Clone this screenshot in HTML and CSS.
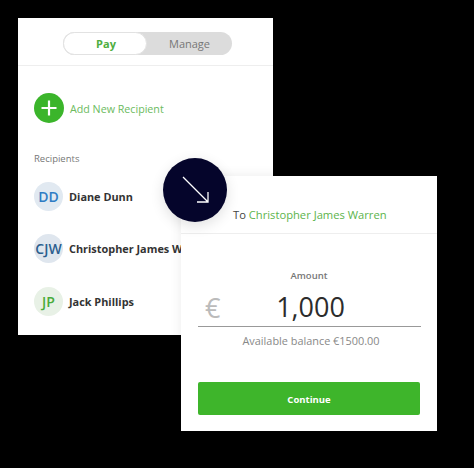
FILE: index.html
```html
<!DOCTYPE html>
<html lang="en">
<head>
    <meta charset="UTF-8">
    <title>Pay</title>
    <link rel="stylesheet" href="styles.css">
</head>
<body>

<div class="stage">
    <!-- Recipients card -->
    <div class="card-left">
        <div class="tabs-bar">
            <div class="tabs">
                <span class="tab tab-active">Pay</span>
                <span class="tab">Manage</span>
            </div>
        </div>
        <div class="left-body">
            <div class="add-row">
                <svg class="add-icon" width="30" height="30" viewBox="0 0 30 30">
                    <circle cx="15" cy="15" r="15" fill="#3bb52b"/>
                    <path d="M15 7.5V22.5M7.5 15H22.5" stroke="#fff" stroke-width="2.2" fill="none"/>
                </svg>
                <span class="add-label">Add New Recipient</span>
            </div>
            <p class="section-label">Recipients</p>
            <div class="recipient">
                <span class="avatar avatar-blue">DD</span>
                <span class="name">Diane Dunn</span>
            </div>
            <div class="recipient">
                <span class="avatar avatar-navy">CJW</span>
                <span class="name">Christopher James Warren</span>
            </div>
            <div class="recipient">
                <span class="avatar avatar-green">JP</span>
                <span class="name">Jack Phillips</span>
            </div>
        </div>
    </div>

    <!-- Amount card -->
    <div class="card-right">
        <div class="to-row">To <span class="to-name">Christopher James Warren</span></div>
        <div class="right-body">
            <p class="amount-label">Amount</p>
            <div class="amount-row">
                <span class="currency">€</span>
                <span class="amount">1,000</span>
            </div>
            <p class="balance">Available balance €1500.00</p>
            <button class="btn">Continue</button>
        </div>
    </div>

    <!-- Arrow badge -->
    <div class="arrow-badge">
        <svg width="64" height="64" viewBox="0 0 64 64">
            <path d="M20 19L45 44M34 44H45V34" stroke="#fff" stroke-width="1.3" fill="none"/>
        </svg>
    </div>
</div>

</body>
</html>
```

FILE: styles.css
```css
/* General Page Styling */
html, body {
    margin: 0;
    height: 100%;
    background: #000;
}

body {
    font-family: "Open Sans", Arial, sans-serif;
    overflow: hidden;
}

p {
    margin: 0;
}

.stage {
    position: relative;
    width: 474px;
    height: 468px;
    padding: 18px 0 0 18px;
    box-sizing: border-box;
}

/* Recipients Card */
.card-left {
    width: 255px;
    height: 317px;
    background: #fff;
    overflow: hidden;
}

.tabs-bar {
    height: 48px;
    padding-top: 14px;
    box-sizing: border-box;
    display: flex;
    justify-content: center;
    border-bottom: 1px solid #eee;
}

.tabs {
    display: flex;
    width: 169px;
    height: 23px;
    margin-left: 4px;
    background: #dcdcdc;
    border-radius: 12px;
}

.tab {
    flex: 1;
    text-align: center;
    font-size: 11px;
    line-height: 23px;
    color: #777;
}

.tab-active {
    flex: 0 0 84px;
    padding-left: 2px;
    background: #fff;
    border: 1px solid #e2e2e2;
    border-radius: 12px;
    box-sizing: border-box;
    line-height: 21px;
    font-weight: 700;
    color: #4fae3f;
}

.left-body {
    padding: 27px 16px 0;
}

.add-row {
    display: flex;
    align-items: center;
    gap: 6px;
}

.add-label {
    padding-top: 2px;
    font-size: 10.7px;
    color: #6cbb5e;
}

.section-label {
    margin-top: 29px;
    font-size: 9.5px;
    line-height: 14px;
    color: #777;
}

.recipient {
    display: flex;
    align-items: center;
    gap: 6px;
    height: 30px;
    margin-top: 22.5px;
    white-space: nowrap;
}

.section-label + .recipient {
    margin-top: 15px;
}

.avatar {
    flex: 0 0 29px;
    height: 29px;
    border-radius: 50%;
    text-align: center;
    font-size: 14px;
    line-height: 29px;
    font-weight: 600;
}

.avatar-blue {
    background: #e1e9f1;
    color: #2f7cc4;
}

.avatar-navy {
    background: #dfe6ee;
    color: #2b5f8f;
}

.avatar-green {
    background: #e8f1e6;
    color: #49ac3a;
}

.name {
    font-size: 10.9px;
    font-weight: 700;
    color: #333;
}

/* Amount Card */
.card-right {
    position: absolute;
    left: 181px;
    top: 176px;
    width: 256px;
    height: 255px;
    background: #fff;
    box-shadow: 0 0 12px rgba(0, 0, 0, 0.08);
}

.to-row {
    height: 58px;
    padding: 31px 0 0 52px;
    box-sizing: border-box;
    font-size: 11.2px;
    line-height: 16px;
    color: #444;
    border-bottom: 1px solid #eee;
}

.to-name {
    color: #5cb44c;
}

.right-body {
    padding: 0 17px;
}

.amount-label {
    margin-top: 35px;
    text-align: center;
    font-size: 9.5px;
    line-height: 14px;
    font-weight: 600;
    color: #777;
}

.amount-row {
    position: relative;
    height: 39px;
    margin-top: 4px;
    width: 223px;
    border-bottom: 1px solid #999;
    text-align: center;
}

.currency {
    position: absolute;
    left: 7px;
    top: 2px;
    font-size: 27px;
    line-height: 38px;
    color: #bbb;
}

.amount {
    font-size: 27px;
    line-height: 40px;
    color: #2c2c2c;
    margin-left: 2px;
}

.balance {
    margin-top: 6px;
    padding-left: 4px;
    text-align: center;
    font-size: 10.9px;
    line-height: 16px;
    color: #888;
}

.btn {
    display: block;
    width: 222px;
    height: 33px;
    padding-top: 3px;
    margin-top: 33px;
    border: none;
    border-radius: 2px;
    background: #3eb52b;
    color: #fff;
    font-family: inherit;
    font-size: 9.5px;
    font-weight: 700;
}

/* Arrow Badge */
.arrow-badge {
    position: absolute;
    left: 163px;
    top: 158px;
    width: 64px;
    height: 64px;
    border-radius: 50%;
    background: #05052b;
    box-shadow: 0 4px 14px rgba(0, 0, 0, 0.12);
}

.arrow-badge svg {
    display: block;
}
```
